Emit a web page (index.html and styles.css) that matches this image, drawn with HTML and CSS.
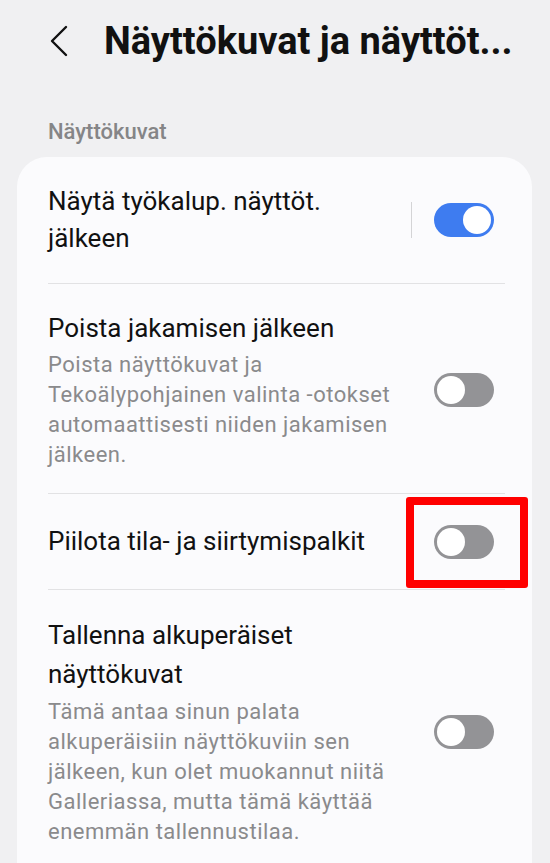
FILE: index.html
```html
<!DOCTYPE html>
<html lang="fi">
<head>
    <meta charset="UTF-8">
    <meta name="viewport" content="width=device-width, initial-scale=1.0">
    <title>Näyttökuvat ja näyttötallenteet</title>
    <link rel="stylesheet" href="styles.css">
</head>
<body>
    <div class="header">
        <svg class="back" width="22" height="32" viewBox="0 0 22 32">
            <path d="M18 2 L4 16 L18 30" fill="none" stroke="#111" stroke-width="2.4" stroke-linecap="round" stroke-linejoin="round"/>
        </svg>
        <h1>Näyttökuvat ja näyttöt...</h1>
    </div>

    <div class="section-label">Näyttökuvat</div>

    <div class="card">
        <div class="row first">
            <div class="text">
                <div class="title">Näytä työkalup. näyttöt. jälkeen</div>
            </div>
            <div class="vline"></div>
            <div class="toggle on"></div>
        </div>
        <div class="row">
            <div class="text">
                <div class="title">Poista jakamisen jälkeen</div>
                <div class="sub">Poista näyttökuvat ja Tekoälypohjainen <span class="nowrap">valinta -otokset</span> automaattisesti niiden jakamisen jälkeen.</div>
            </div>
            <div class="toggle"></div>
        </div>
        <div class="row single">
            <div class="text">
                <div class="title">Piilota tila- ja siirtymispalkit</div>
            </div>
            <div class="toggle"></div>
            <div class="highlight"></div>
        </div>
        <div class="row last">
            <div class="text">
                <div class="title">Tallenna alkuperäiset näyttökuvat</div>
                <div class="sub">Tämä antaa sinun palata alkuperäisiin näyttökuviin sen jälkeen, kun olet muokannut niitä Galleriassa, mutta tämä käyttää enemmän tallennustilaa.</div>
            </div>
            <div class="toggle"></div>
        </div>
    </div>
</body>
</html>
```

FILE: styles.css
```css
body {
    margin: 0;
    padding: 0;
    background: #f0f0f2;
    font-family: Roboto, "Noto Sans", Arial, sans-serif;
    color: #111;
    height: 863px;
    overflow: hidden;
}
.header {
    display: flex;
    align-items: center;
    height: 82px;
    padding-left: 48px;
}
.back {
    margin-right: 34px;
}
h1 {
    margin: 0;
    font-size: 38px;
    font-weight: 700;
    white-space: nowrap;
}
.section-label {
    margin-top: 37px;
    padding-left: 48px;
    font-size: 22px;
    font-weight: 500;
    color: #858587;
    height: 38px;
}
.card {
    background: #fbfbfd;
    margin: 0 18px 0 17px;
    border-radius: 30px 30px 0 0;
    padding: 0 27px 0 31px;
    height: 706px;
    box-sizing: border-box;
}
.row {
    position: relative;
    display: flex;
    align-items: center;
    border-bottom: 1.5px solid #e2e2e4;
    padding: 26px 11px 23px 0;
}
.row.first {
    padding-bottom: 26px;
}
.row.single {
    padding: 29px 11px 29px 0;
}
.row.last {
    border-bottom: none;
}
.text {
    flex: 1;
    padding-right: 36px;
}
.title {
    font-size: 26px;
    line-height: 37px;
    color: #111;
}
.last .title {
    line-height: 39px;
}
.sub {
    margin-top: 3px;
    font-size: 22px;
    line-height: 30px;
    letter-spacing: 0.5px;
    color: #8a8a8c;
}
.nowrap {
    white-space: nowrap;
}
.vline {
    width: 1.5px;
    height: 36px;
    background: #d4d4d6;
    margin-right: 22px;
}
.first .text {
    padding-right: 20px;
}
.toggle {
    position: relative;
    flex: none;
    width: 60px;
    height: 34px;
    border-radius: 17px;
    background: #939396;
}
.toggle::after {
    content: "";
    position: absolute;
    left: 3px;
    top: 3px;
    width: 28px;
    height: 28px;
    border-radius: 50%;
    background: #fff;
}
.toggle.on {
    background: #3e7cf0;
}
.toggle.on::after {
    left: auto;
    right: 3px;
}
.highlight {
    position: absolute;
    right: -23px;
    top: 3px;
    width: 122px;
    height: 91px;
    box-sizing: border-box;
    border: 8px solid #f00;
    border-radius: 3px;
}
.row.single .text {
    padding-right: 0;
}
```
